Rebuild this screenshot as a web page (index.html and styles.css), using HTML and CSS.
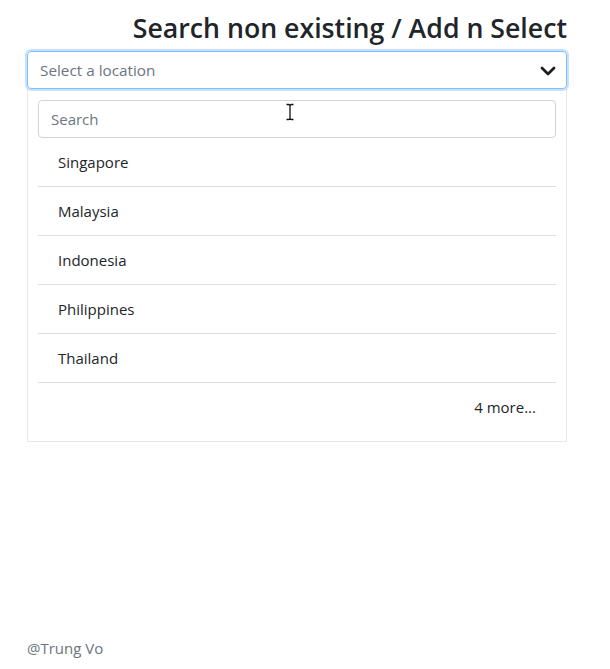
FILE: index.html
```html
<!DOCTYPE html>
<html lang="en">
<head>
<meta charset="utf-8">
<title>Search non existing / Add n Select</title>
<link rel="stylesheet" href="styles.css">
</head>
<body>
<div class="page">
  <main class="content">
    <h3 class="title">Search non existing / Add n Select</h3>
    <div class="select">
      <span class="select-placeholder">Select a location</span>
      <svg class="chevron" width="16" height="12" viewBox="0 0 16 12" aria-hidden="true">
        <path d="M2 3 L8 9 L14 3" fill="none" stroke="#1f1f1f" stroke-width="2.8" stroke-linecap="round" stroke-linejoin="round"/>
      </svg>
    </div>
    <div class="panel">
      <div class="search-wrap">
        <input class="search" type="text" placeholder="Search">
        <svg class="ibeam" width="10" height="18" viewBox="0 0 10 18" aria-hidden="true">
          <path d="M1.5 1.5 H3.5 Q5 1.5 5 3 V15 Q5 16.5 3.5 16.5 H1.5 M8.5 1.5 H6.5 Q5 1.5 5 3 M5 15 Q5 16.5 6.5 16.5 H8.5" fill="none" stroke="#111" stroke-width="1.3"/>
        </svg>
      </div>
      <ul class="options">
        <li class="option">Singapore</li>
        <li class="option">Malaysia</li>
        <li class="option">Indonesia</li>
        <li class="option">Philippines</li>
        <li class="option">Thailand</li>
      </ul>
      <div class="more">4 more...</div>
    </div>
  </main>
  <footer class="footer">@Trung Vo</footer>
</div>
</body>
</html>
```

FILE: styles.css
```css
html, body {
  margin: 0;
  padding: 0;
  background: #fff;
}

body {
  font-family: "Open Sans", "Noto Sans", sans-serif;
  color: #212529;
}

.page {
  min-height: 669px;
  box-sizing: border-box;
  padding: 0 43px 9px 27px;
  display: flex;
  flex-direction: column;
}

.content {
  display: flex;
  flex-direction: column;
}

.title {
  margin: 11px 0 6px;
  text-align: right;
  font-size: 26.7px;
  font-weight: 600;
  line-height: 34px;
  color: #212529;
}

.select {
  height: 38px;
  box-sizing: border-box;
  border: 1px solid #80bdff;
  border-radius: 4px;
  box-shadow: 0 0 0 2px rgba(0, 123, 255, 0.22);
  display: flex;
  align-items: center;
  justify-content: space-between;
  padding: 0 10px 0 12px;
  position: relative;
  z-index: 1;
}

.select-placeholder {
  font-size: 15.3px;
  color: #6c757d;
}

.chevron {
  display: block;
  margin-top: 1px;
}

.panel {
  border: 1px solid #e8e8e8;
  border-top: none;
  padding: 11px 10px 10px;
  display: flex;
  flex-direction: column;
}

.search-wrap {
  position: relative;
}

.search {
  display: block;
  width: 100%;
  box-sizing: border-box;
  height: 38px;
  border: 1px solid #ced4da;
  border-radius: 4px;
  padding: 0 12px;
  font-family: inherit;
  font-size: 15px;
  color: #495057;
  outline: none;
}

.search::placeholder {
  color: #6c757d;
}

.ibeam {
  position: absolute;
  left: 247px;
  top: 3px;
}

.options {
  list-style: none;
  margin: 0;
  padding: 0;
}

.option {
  height: 48px;
  line-height: 48px;
  padding-left: 20px;
  border-bottom: 1px solid #dedede;
  font-size: 15px;
  color: #212529;
}

.more {
  height: 48px;
  line-height: 48px;
  text-align: right;
  padding-right: 20px;
  font-size: 15px;
  color: #212529;
}

.footer {
  margin-top: auto;
  font-size: 15px;
  line-height: 24px;
  color: #6c757d;
}
```
